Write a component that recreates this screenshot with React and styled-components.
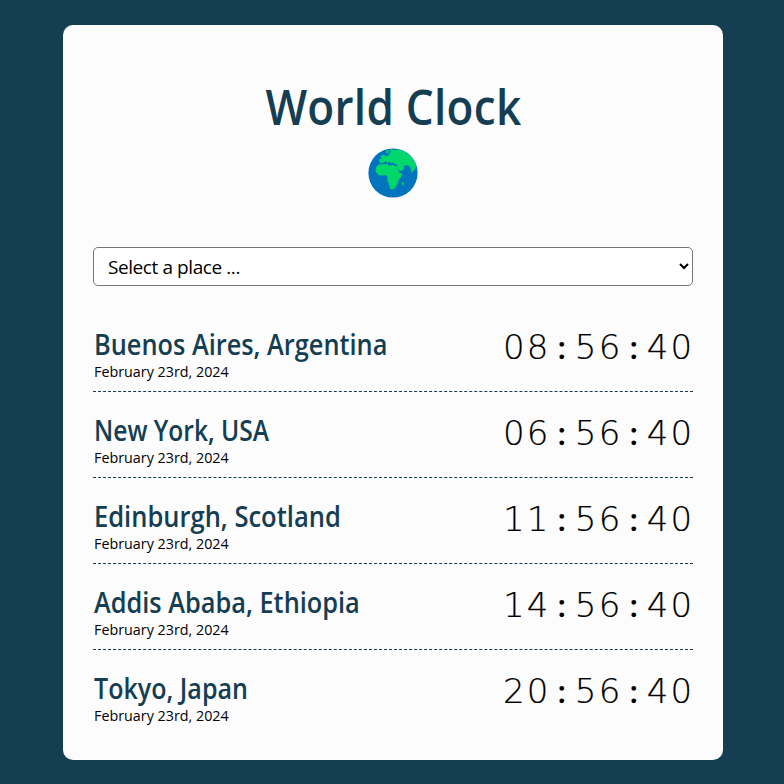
import React from 'react';
import styled, { createGlobalStyle } from 'styled-components';

const GlobalStyle = createGlobalStyle`
  *, *::before, *::after { box-sizing: border-box; }
  body {
    margin: 0;
    background: #153e52;
    color: #000;
    font-family: "Open Sans", "Noto Sans", sans-serif;
  }
`;

const Page = styled.main`
  min-height: 784px;
  padding: 25px 61px 24px 63px;
`;

const Card = styled.section`
  height: 735px;
  padding: 48px 30px 0;
  border-radius: 10px;
  background: #fcfcfc;
`;

const Header = styled.header`
  display: flex;
  flex-direction: column;
  align-items: center;
`;

const Title = styled.h1`
  margin: 0;
  font-size: 48px;
  font-weight: 600;
  line-height: 67px;
  letter-spacing: 0.3px;
  color: #153e52;
  white-space: nowrap;
  transform: scaleX(0.918);
`;

const GlobeIcon = styled.svg`
  display: block;
  width: 50px;
  height: 50px;
  margin-top: 8px;
`;

const PlaceSelect = styled.select`
  display: block;
  width: 100%;
  height: 39px;
  margin: 49px 0 0;
  padding: 1px 10px 0;
  border: 1px solid #767676;
  border-radius: 5px;
  background-color: #fff;
  color: #000;
  font: inherit;
  font-size: 19px;
  letter-spacing: -0.42px;
`;

const Places = styled.div`
  padding-top: 20px;
`;

const PlaceRow = styled.article`
  display: flex;
  justify-content: space-between;
  height: 86px;
  padding-top: 20px;
  border-bottom: ${(p) => (p.$last ? 'none' : '1px dashed #153e52')};
`;

const PlaceInfo = styled.div`
  padding-left: 0.6px;
`;

const PlaceName = styled.h2`
  margin: 0;
  font-size: 28px;
  font-weight: 600;
  line-height: 36px;
  color: #153e52;
  white-space: nowrap;
  transform: scaleX(${(p) => p.$condense});
  transform-origin: left;
`;

const PlaceDate = styled.div`
  font-size: 15px;
  line-height: 19px;
  transform: scaleX(0.955);
  transform-origin: left;
`;

const Time = styled.div`
  margin-right: -1.5px;
  font-family: "DejaVu Sans", sans-serif;
  font-size: 34px;
  font-weight: 200;
  line-height: 42px;
  letter-spacing: 2.3px;
  white-space: nowrap;
  -webkit-text-stroke: 0.2px #000;
`;

const Colon = styled.span`
  display: inline-block;
  width: 24px;
  padding-right: 2px;
  text-align: center;
  font-family: "Open Sans", sans-serif;
  font-size: 31px;
  font-weight: 600;
  letter-spacing: 0;
  line-height: 1;
`;

const places = [
  { name: 'Buenos Aires, Argentina', hour: '08', condense: 0.905 },
  { name: 'New York, USA', hour: '06', condense: 0.877 },
  { name: 'Edinburgh, Scotland', hour: '11', condense: 0.911 },
  { name: 'Addis Ababa, Ethiopia', hour: '14', condense: 0.905 },
  { name: 'Tokyo, Japan', hour: '20', condense: 0.895 },
];

function Globe() {
  return (
    <GlobeIcon viewBox="0 0 50 50" aria-hidden="true">
      <circle cx="25" cy="25" r="24.6" fill="#0074bd" />
      <path
        fill="#00d76b"
        d="M18.500 1.600L20 3L23 1.200L28 2.200L30 1Q43 4 48.300 17.500Q48 19.500 46.500 21.500L44.500 24.300Q43.300 24.300 42.800 22Q42.800 18.500 40.500 17.800L37.500 17.300L36 18.500Q36.800 20.500 35.500 21.800Q33.500 23.500 31.500 22.500Q29.500 21.500 29 19.500Q29.500 18 28.500 16.500L24.500 14.500L23 15.500L21.500 13.500L19.500 15.300L17.500 13L15 15.300Q11.500 15.500 11 13.500L11.500 11L14 10.500L12.500 8.500Q15 5.500 17 7.800Q20 9 21.300 6.500L21 4.500L18 5Z"
      />
      <path
        fill="#00d76b"
        d="M7.500 22Q8 17.500 12 16.300Q16 16.500 19 15.800L20.500 17.500L25 17L28.500 18L30.500 23Q31.500 25.500 34.300 25.500Q34 29 30.800 31.500L29.800 35.500L27.500 39Q25.500 42.500 22.300 41L20.500 34.500L19.300 33L19.500 28.500L17.500 27Q12 28.500 9.500 26Q7.300 24.500 7.500 22Z"
      />
      <path fill="#00d76b" d="M34.200 34.500L35.800 33.300L35.600 36L34.600 37.500L33.800 36.700Z" />
      <path fill="#0074bd" d="M20.500 3.500L22 2.800L23.500 3.800L22 5Z" />
    </GlobeIcon>
  );
}

export default function App() {
  return (
    <>
      <GlobalStyle />
      <Page>
        <Card>
          <Header>
            <Title>World Clock</Title>
            <Globe />
          </Header>
          <PlaceSelect defaultValue="" aria-label="Place">
            <option value="">Select a place ...</option>
          </PlaceSelect>
          <Places>
            {places.map((place, i) => (
              <PlaceRow key={place.name} $last={i === places.length - 1}>
                <PlaceInfo>
                  <PlaceName $condense={place.condense}>{place.name}</PlaceName>
                  <PlaceDate>February 23rd, 2024</PlaceDate>
                </PlaceInfo>
                <Time>
                  {place.hour}<Colon>:</Colon>56<Colon>:</Colon>40
                </Time>
              </PlaceRow>
            ))}
          </Places>
        </Card>
      </Page>
    </>
  );
}
